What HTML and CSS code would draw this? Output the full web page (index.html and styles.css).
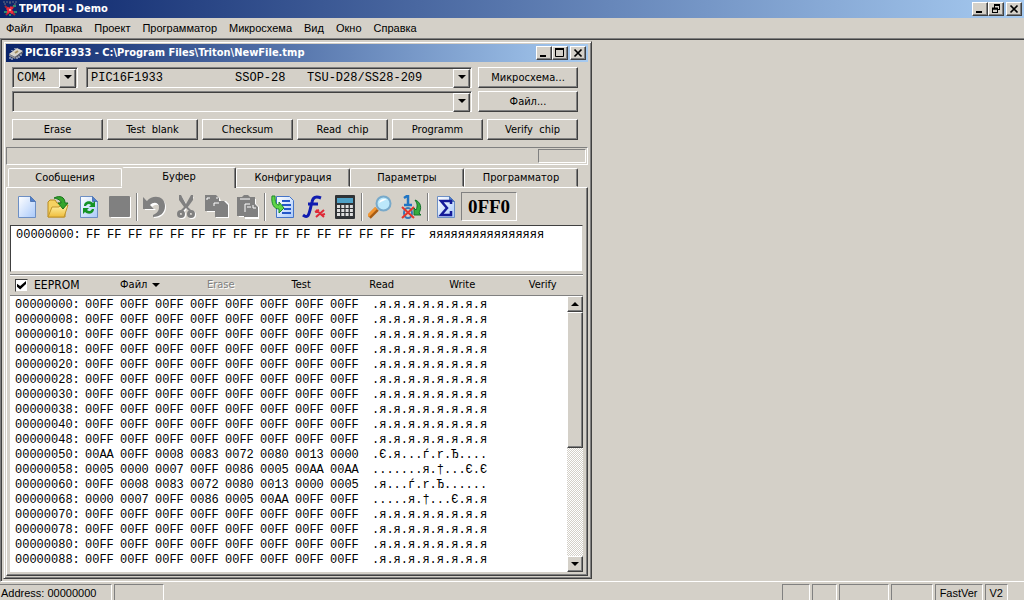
FILE: index.html
```html
<!DOCTYPE html>
<html lang="ru">
<head>
<meta charset="utf-8">
<title>ТРИТОН - Demo</title>
<link rel="stylesheet" href="styles.css">
</head>
<body>
<header class="titlebar app-title">
  <svg class="title-icon" width="16" height="16" viewBox="0 0 16 16" aria-hidden="true">
    <path d="M1 1h14M2 3h3M7 2h3M12 3h3" stroke="#697183" stroke-dasharray="2 1"/>
    <path d="M3 5l10 9M13 4L4 14" stroke="#a62838" stroke-width="2"/>
    <path d="M5 7l6 5M10 6l-5 6" stroke="#ef2c3c" stroke-width="3"/>
    <path d="M2 11h3M11 5h3M12 11h3M7 14h2" stroke="#2e8b70" stroke-width="2"/>
    <path d="M7 8h2v2H7z" fill="#f8a0a0"/>
  </svg>
  <h1 class="title-text">ТРИТОН - Demo</h1>
  <div class="caption-buttons">
    <button class="cap" aria-label="Свернуть"><svg width="12" height="10" viewBox="0 0 12 10"><path d="M2 8h6" stroke="#000" stroke-width="2"/></svg></button>
    <button class="cap" aria-label="Восстановить"><svg width="12" height="10" viewBox="0 0 12 10"><path d="M4 1h6M4.500 1v3M9.500 1v5M8 5.500h2M2 5h6M2.500 4v5M7.500 4v5M2 8.500h6" stroke="#000" fill="none"/><path d="M4 1h6M2 4.500h6" stroke="#000" stroke-width="2"/></svg></button>
    <button class="cap cap-close" aria-label="Закрыть"><svg width="12" height="10" viewBox="0 0 12 10"><path d="M2.500 1.500l7 7M9.500 1.500l-7 7" stroke="#000" stroke-width="1.700"/></svg></button>
  </div>
</header>
<nav class="menu">
  <button>Файл</button><button>Правка</button><button>Проект</button><button>Программатор</button><button>Микросхема</button><button>Вид</button><button>Окно</button><button>Справка</button>
</nav>
<main class="mdi">
  <section class="child">
    <header class="titlebar">
      <svg class="title-icon" width="16" height="16" viewBox="0 0 16 16" aria-hidden="true">
        <path d="M1 9l8-6 6 3-8 6z" fill="#d8d5cc"/><path d="M1 9l6 3v2l-6-3z" fill="#8d8d8d"/><path d="M7 12l8-6v2l-8 6z" fill="#66666c"/>
        <path d="M2 12v2M4 13v2M9 12v2M11 11v2M13 9v2M4 6V5M7 4V3" stroke="#e8e8e8"/><path d="M7 8l3-2" stroke="#a38f60" stroke-width="2"/>
      </svg>
      <h2 class="title-text">PIC16F1933 - C:\Program Files\Triton\NewFile.tmp</h2>
      <div class="caption-buttons">
        <button class="cap" aria-label="Свернуть"><svg width="12" height="10" viewBox="0 0 12 10"><path d="M2 8h6" stroke="#000" stroke-width="2"/></svg></button>
        <button class="cap" aria-label="Развернуть"><svg width="12" height="10" viewBox="0 0 12 10"><path d="M1.500 1v7.500h8V1" stroke="#000" fill="none"/><path d="M1 1h9" stroke="#000" stroke-width="2"/></svg></button>
        <button class="cap cap-close" aria-label="Закрыть"><svg width="12" height="10" viewBox="0 0 12 10"><path d="M2.500 1.500l7 7M9.500 1.500l-7 7" stroke="#000" stroke-width="1.700"/></svg></button>
      </div>
    </header>
    <div class="controls">
      <div class="row">
        <div class="combo combo-port"><select aria-label="Порт"><option>COM4</option></select></div>
        <div class="combo combo-wide"><select aria-label="Микросхема"><option>PIC16F1933&nbsp;&nbsp;&nbsp;&nbsp;&nbsp;&nbsp;&nbsp;&nbsp;&nbsp;&nbsp;SSOP-28&nbsp;&nbsp;&nbsp;TSU-D28/SS28-209</option></select></div>
        <button class="btn btn-side">Микросхема...</button>
      </div>
      <div class="row">
        <div class="combo combo-wide"><select aria-label="Файл"><option></option></select></div>
        <button class="btn btn-side">Файл...</button>
      </div>
      <div class="actions">
        <button class="btn">Erase</button><button class="btn">Test&nbsp; blank</button><button class="btn">Checksum</button><button class="btn">Read&nbsp; chip</button><button class="btn">Programm</button><button class="btn">Verify&nbsp; chip</button>
      </div>
    </div>
    <div class="progress"><div class="progress-cell"></div></div>
    <div class="tabs" role="tablist">
      <button class="tab" role="tab">Сообщения</button><button class="tab tab-on" role="tab" aria-selected="true">Буфер</button><button class="tab" role="tab">Конфигурация</button><button class="tab" role="tab">Параметры</button><button class="tab" role="tab">Программатор</button>
    </div>
    <div class="panel">
      <svg class="defs" aria-hidden="true"><defs>
        <linearGradient id="sheet" x2="1" y2="1"><stop offset="0" stop-color="#fff"/><stop offset="1" stop-color="#a9c9fa"/></linearGradient>
        <linearGradient id="folder" x2="0" y2="1"><stop offset="0" stop-color="#fff3a8"/><stop offset="1" stop-color="#efbd3c"/></linearGradient>
        <symbol id="page" viewBox="0 0 24 24"><path d="M3.500 1.500h12l5 5v16h-17z" fill="url(#sheet)" stroke="#6d8fc4"/><path d="M15.500 1.500v5h5z" fill="#4f7fcd" stroke="#5379b5"/></symbol>
      </defs></svg>
      <div class="toolbar">
        <button class="tool" aria-label="Новый"><svg viewBox="0 0 24 24"><use href="#page"/></svg></button>
        <button class="tool" aria-label="Открыть"><svg viewBox="0 0 24 24"><path d="M2 22V7l2-2h5l2 3h8v14z" fill="#f5d262" stroke="#b98a20"/><path d="M2 22l4-10h7l2-2h7l-4 12z" fill="url(#folder)" stroke="#c2962c"/><path d="M8 3c6-3 11-1 11 5h3l-5 6-5-6h3c0-3-3-4-7-5z" fill="#35a52c" stroke="#17731d"/></svg></button>
        <button class="tool" aria-label="Обновить"><svg viewBox="0 0 24 24"><use href="#page"/><path d="M7 11c0-5 6-6 9-3l2-2v6h-6l2-2c-2-2-4-1-5 1zM17 14c0 5-6 6-9 3l-2 2v-6h6l-2 2c2 2 4 1 5-1z" fill="#159326"/></svg></button>
        <button class="tool" disabled aria-label="Сохранить"><svg viewBox="0 0 24 24"><path d="M4 2h19v21H3z" fill="#fff"/><rect x="1" y="1" width="21" height="21" rx="1" fill="#808080"/></svg></button>
        <span class="sep"></span>
        <button class="tool" disabled aria-label="Отменить"><svg viewBox="0 0 24 24"><path d="M2 4v11h11l-4-3c4-4 8-2 8 2 0 3-3 5-6 7v2c8 0 12-5 12-11C23 3 12 0 5 7z" fill="#fff"/><path d="M0 2v12h11l-4-4c4-4 9-2 9 2 0 4-2 6-6 8v2c7 0 12-4 12-11C22 1 10-1 4 6z" fill="#808080"/></svg></button>
        <button class="tool" disabled aria-label="Вырезать"><svg viewBox="0 0 24 24"><g fill="none" stroke="#fff" stroke-width="2"><path d="M7 2l10 16M19 2L9 18"/><circle cx="8" cy="20" r="3"/><circle cx="18" cy="20" r="3"/></g><path d="M5 0l2 0 5 9L17 0h2v5l-5 7 4 4h-3l-3-3-3 3H6l4-4-5-7z" fill="#808080"/><g fill="none" stroke="#808080" stroke-width="3"><circle cx="7" cy="19" r="2.500"/><circle cx="17" cy="19" r="2.500"/></g></svg></button>
        <button class="tool" disabled aria-label="Копировать"><svg viewBox="0 0 24 24"><path d="M2 2h12l2 4h5l3 3v14H11v-6H2z" fill="#fff"/><path d="M0 0h11l3 3v3h5l4 4v12H10v-6H0z" fill="#808080"/><path d="M2 3h3M2 3v2M9 8h5M9 8v3M12 2v2" stroke="#fff" fill="none"/></svg></button>
        <button class="tool" disabled aria-label="Вставить"><svg viewBox="0 0 24 24"><path d="M3 4h17v5l3 3v12H9v-2H3z" fill="#fff"/><path d="M1 2h5l2-2h4l2 2h5v7l3 3v10H8v-1H1z" fill="#808080"/><path d="M4 4h10M9 17V9h5M11 12h4M17 10v3h3" stroke="#fff" fill="none"/></svg></button>
        <span class="sep"></span>
        <button class="tool" aria-label="Заполнить"><svg viewBox="0 0 24 24"><path d="M5.500 1.500h13l4 4v17h-17z" fill="url(#sheet)" stroke="#4474c8"/><path d="M11 6h8M11 10h9M13 14h7M11 18h9" stroke="#2457c8" stroke-width="2"/><path d="M1 1h3c0 6 1 9 4 9V7l5 6-5 5v-4C3 14 0 9 1 1z" fill="#5fd647" stroke="#1d8929"/></svg></button>
        <button class="tool" aria-label="Функция"><svg viewBox="0 0 24 24"><path d="M1 20c5 4 6 0 8-9l1-4c1-5 4-6 9-4M6 9h10" fill="none" stroke="#101caf" stroke-width="3"/><path d="M14 15l8 7M22 15l-8 7M13 17l4-2M19 20l4-1" stroke="#df2937" stroke-width="2"/></svg></button>
        <button class="tool" aria-label="Калькулятор"><svg viewBox="0 0 24 24"><rect x="2" y="0" width="20" height="24" rx="1" fill="#303336"/><path d="M4 3h16v5H4z" fill="#4fa2c7"/><path d="M4 11.500h16M4 15.500h16M4 19.500h16" stroke="#dedede" stroke-width="3" stroke-dasharray="3 1.300"/></svg></button>
        <span class="sep"></span>
        <button class="tool" aria-label="Найти"><svg viewBox="0 0 24 24"><path d="M1 22l8-8" stroke="#a85c13" stroke-width="5"/><path d="M0 21l8-8" stroke="#f29632" stroke-width="3"/><circle cx="15.500" cy="8.500" r="7" fill="#bce8fb" stroke="#78a9ca" stroke-width="2"/><path d="M11 8c1-4 5-5 8-3-4 0-5 2-8 3z" fill="#fff"/></svg></button>
        <button class="tool" aria-label="Инвертировать"><svg viewBox="0 0 24 24"><path d="M5 3l3-2h1v10M5 10h8" stroke="#2075c4" stroke-width="2.500" fill="none"/><ellipse cx="9" cy="18" rx="4" ry="5" fill="none" stroke="#367bb9" stroke-width="2"/><path d="M3 12l12 11M15 12L3 23" stroke="#e3372b" stroke-width="2"/><path d="M16 5c6 2 7 8 4 13l2 2h-7v-7l2 2c2-4 1-7-1-10z" fill="#35ac3e" stroke="#12702a"/></svg></button>
        <span class="sep"></span>
        <button class="tool" aria-label="Контрольная сумма"><svg viewBox="0 0 24 24"><use href="#page"/><path d="M17 9V6H7l6 7-6 7h10v-4" fill="none" stroke="#151b99" stroke-width="2.500"/></svg></button>
        <output class="sum">0FF0</output>
      </div>
      <div class="hexbox"><table class="hex bytes" aria-label="Память программ"><tbody id="bytes"></tbody></table></div>
      <div class="eebar">
        <label class="eecheck"><input type="checkbox" checked>EEPROM</label>
        <button>Файл<span class="tri"></span></button><button disabled>Erase</button><button>Test</button><button>Read</button><button>Write</button><button>Verify</button>
      </div>
      <div class="eelist">
        <table class="hex words" aria-label="EEPROM"><tbody id="words"></tbody></table>
        <div class="scroll"><button class="scroll-btn" aria-label="Вверх"><span class="tri tri-up"></span></button><div class="thumb"></div><div class="track"></div><button class="scroll-btn" aria-label="Вниз"><span class="tri"></span></button></div>
      </div>
    </div>
  </section>
</main>
<footer class="status">
  <span class="cell cell-address">Address: 00000000</span><span class="cell cell-mode"></span><span class="status-gap"></span>
  <span class="cell cell-a"></span><span class="cell cell-b"></span><span class="cell cell-mode"></span><span class="cell cell-c"></span><span class="cell cell-text">FastVer</span><span class="cell cell-text">V2</span><span class="grip"></span>
</footer>
<script src="app.js"></script>
</body>
</html>
```
FILE: styles.css
```css
* { box-sizing: border-box; }
body { margin: 0; min-height: 100vh; display: flex; flex-direction: column; background: #d4d0c8; color: #000; font: 11px/14px "DejaVu Sans Condensed", "Liberation Sans", sans-serif; }
button, input, select { font: inherit; color: inherit; margin: 0; padding: 0; }
button { background: none; border: 0; white-space: nowrap; }
svg { display: block; }

.titlebar { display: flex; align-items: center; height: 18px; padding: 0 2px; background: linear-gradient(90deg, #0a246a, #a6caf0); color: #fff; }
.title-icon { flex: none; margin-right: 1px; }
.title-text { margin: 0; flex: 1; font: bold 11px/16px "DejaVu Sans Condensed", sans-serif; white-space: nowrap; overflow: hidden; }
.caption-buttons { display: flex; }
.cap { width: 16px; height: 14px; padding: 1px; background: #d4d0c8; border: 1px solid; border-color: #fff #404040 #404040 #fff; box-shadow: inset -1px -1px #808080; }
.cap-close { margin-left: 2px; }

.menu { display: flex; flex-wrap: wrap; gap: 12px; padding: 3px 6px; min-height: 20px; font-family: "Liberation Sans", sans-serif; }

.mdi { flex: 1; display: flex; align-items: flex-start; border-top: 1px solid #808080; border-left: 1px solid #808080; border-bottom: 1px solid #fff; box-shadow: inset 1px 1px #404040; padding: 2px; }
.child { width: 589px; max-width: 100%; padding: 2px 3px 2px 2px; border: 1px solid; border-color: #d4d0c8 #404040 #404040 #d4d0c8; box-shadow: inset 1px 1px #fff, inset -1px -1px #808080; }
.controls { padding: 5px 10px 7px 6px; }
.row { display: flex; height: 21px; margin-bottom: 3px; }
.combo { position: relative; background: #d4d0c8; border: 1px solid; border-color: #808080 #fff #fff #808080; box-shadow: inset 1px 1px #404040; }
.combo-port { width: 66px; margin-right: 8px; }
.combo-wide { flex: 1; }
.combo select { appearance: none; width: 100%; height: 100%; border: 0; padding: 0 4px; background: none; font: 12px "Liberation Mono", monospace; }
.combo::before { content: ""; position: absolute; right: 1px; top: 1px; width: 15px; height: 17px; background: #d4d0c8; border: 1px solid; border-color: #fff #404040 #404040 #fff; box-shadow: inset -1px -1px #808080; pointer-events: none; }
.combo::after { content: ""; position: absolute; right: 5px; top: 7px; border: 4px solid transparent; border-top-color: #000; border-bottom: 0; pointer-events: none; }
.btn { flex: 1; height: 21px; border: 1px solid; border-color: #fff #404040 #404040 #fff; box-shadow: inset -1px -1px #808080; }
.btn-side { flex: 0 0 100px; margin-left: 6px; }
.actions { display: flex; gap: 4px; padding-top: 4px; }

.progress { display: flex; justify-content: flex-end; height: 18px; padding: 1px; border: 1px solid; border-color: #808080 #fff #fff #808080; }
.progress-cell { width: 48px; border: 1px solid; border-color: #808080 #fff #fff #808080; }

.tabs { display: flex; align-items: flex-end; height: 22px; padding: 0 10px 0 2px; }
.tab { flex: 1; height: 19px; border: 1px solid; border-color: #fff #404040 transparent #fff; border-radius: 2px 2px 0 0; box-shadow: inset -1px 0 #808080; }
.tab:first-child { border-right-color: #fff; box-shadow: none; }
.tab-on { height: 21px; margin-bottom: -1px; padding-bottom: 3px; background: #d4d0c8; border-bottom: 0; border-left-color: #d4d0c8; z-index: 1; }
.panel { border: 1px solid; border-color: #fff #404040 #404040 #fff; box-shadow: inset -1px -1px #808080; padding: 0 4px 3px 3px; }
.defs { width: 0; height: 0; }
.toolbar { display: flex; align-items: center; height: 37px; padding-left: 1px; }
.tool { width: 31px; height: 30px; display: grid; place-items: center; flex: none; }
.tool svg { width: 24px; height: 24px; }
.sep { width: 2px; height: 28px; margin: 0 1px; border-left: 1px solid #808080; border-right: 1px solid #fff; }
.sum { width: 56px; height: 29px; border: 1px solid; border-color: #808080 #fff #fff #808080; font: bold 19px/27px "Liberation Serif", serif; text-align: center; }

.hexbox { height: 47px; background: #fff; border: 1px solid; border-color: #404040 #d4d0c8 #d4d0c8 #404040; padding: 2px 5px; }
.hex { border-collapse: collapse; table-layout: fixed; font: 12px/15px "Liberation Mono", monospace; }
.hex td { padding: 0; height: 15px; white-space: nowrap; }
.bytes { width: 525px; }
.words { width: 470px; margin: 2px 5px 4px; }
.eebar { display: flex; align-items: center; height: 22px; margin-top: 2px; border-top: 1px solid #808080; border-bottom: 1px solid #808080; box-shadow: inset 0 1px #fff; }
.eebar button { flex: 1; height: 20px; }
.eebar button:disabled { color: #808080; text-shadow: 1px 1px #fff; }
.eecheck { display: flex; align-items: center; gap: 6px; width: 90px; padding-left: 5px; font-size: 12px; }
.eecheck input { appearance: none; width: 13px; height: 13px; background: #fff; border: 1px solid; border-color: #404040 #d4d0c8 #d4d0c8 #404040; }
.eecheck input:checked::before { content: ""; display: block; width: 9px; height: 9px; margin: 1px; background: #000; clip-path: polygon(0 35%, 35% 62%, 100% 5%, 100% 38%, 35% 100%, 0 70%); }
.tri { display: inline-block; margin-left: 5px; border: 4px solid transparent; border-top-color: #000; border-bottom: 0; vertical-align: middle; }
.tri-up { transform: rotate(180deg); }
.eelist { display: flex; justify-content: space-between; background: #fff; }
.scroll { width: 16px; display: flex; flex-direction: column; }
.scroll-btn { height: 16px; display: grid; place-items: center; }
.scroll-btn .tri { margin: 0; }
.scroll-btn, .thumb { background: #d4d0c8; border: 1px solid; border-color: #fff #404040 #404040 #fff; box-shadow: inset -1px -1px #808080; }
.thumb { flex: 135; }
.track { flex: 108; background: repeating-conic-gradient(#fff 0 25%, #d4d0c8 0 50%) 0 0 / 2px 2px; }

.status { display: flex; gap: 2px; height: 19px; padding-top: 2px; font: 11px/16px "Liberation Sans", sans-serif; }
.cell { border: 1px solid; border-color: #808080 #fff transparent #808080; padding: 0 1px; white-space: nowrap; }
.cell-address { width: 112px; border-left: 0; }
.cell-mode { width: 50px; }
.cell-a { width: 28px; }
.cell-b { width: 25px; }
.cell-c { width: 42px; }
.cell-text { padding: 0 4px; }
.status-gap { flex: 1; }
.grip { width: 14px; }
```
FILE: app.js
```js
const full = "00FF 00FF 00FF 00FF 00FF 00FF 00FF 00FF";
const special = {
  0x50: ["00AA 00FF 0008 0083 0072 0080 0013 0000", ".Є.я...ѓ.r.Ђ...."],
  0x58: ["0005 0000 0007 00FF 0086 0005 00AA 00AA", ".......я.†...Є.Є"],
  0x60: ["00FF 0008 0083 0072 0080 0013 0000 0005", ".я...ѓ.r.Ђ......"],
  0x68: ["0000 0007 00FF 0086 0005 00AA 00FF 00FF", ".....я.†...Є.я.я"]
};

function addRow(id, address, values, text, widths) {
  const row = document.getElementById(id).insertRow();
  [address, ...values, text].forEach((value, i, all) => {
    const cell = row.insertCell();
    cell.textContent = value;
    cell.style.width = (i === 0 ? 70 : i === all.length - 1 ? widths.text : widths.value) + "px";
    if (i === all.length - 1) cell.style.paddingLeft = "7px";
  });
}

addRow("bytes", "00000000:", Array(16).fill("FF"), "я".repeat(16), { value: 21, text: 119 });
for (let a = 0; a <= 0x88; a += 8) {
  const [words, text] = special[a] || [full, ".я".repeat(8)];
  const address = a.toString(16).toUpperCase().padStart(8, "0") + ":";
  addRow("words", address, words.split(" "), text, { value: 35, text: 120 });
}
```
